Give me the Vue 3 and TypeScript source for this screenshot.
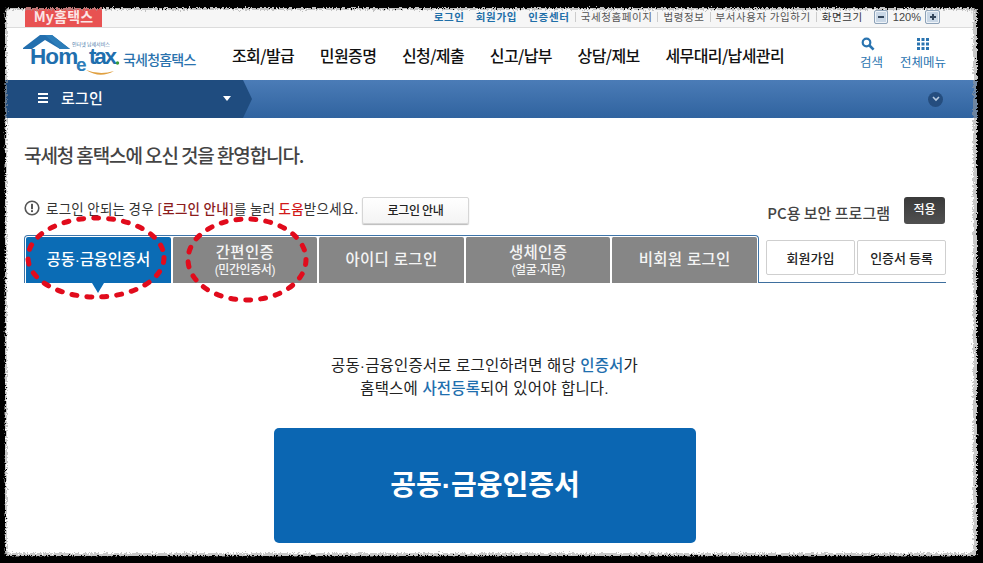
<script setup lang="ts">
const navItems: string[] = ['조회/발급', '민원증명', '신청/제출', '신고/납부', '상담/제보', '세무대리/납세관리']
interface Tab { title: string; sub?: string; active?: boolean }
const tabs: Tab[] = [
  { title: '공동·금융인증서', active: true },
  { title: '간편인증', sub: '(민간인증서)' },
  { title: '아이디 로그인' },
  { title: '생체인증', sub: '(얼굴·지문)' },
  { title: '비회원 로그인' }
]
const utilLinks: string[] = ['국세청홈페이지', '법령정보', '부서사용자 가입하기']
</script>

<template>
  <div class="page">
    <div class="frame">
      <div class="topbar">
        <a class="my">My홈택스</a>
        <div class="util">
          <a class="strong">로그인</a>
          <a class="strong">회원가입</a>
          <a class="strong">인증센터</a>
          <a v-for="l in utilLinks" :key="l" class="plain">{{ l }}</a>
          <span class="plain dark">화면크기</span>
          <span class="zoombtn minus"><i></i></span>
          <span class="pct">120%</span>
          <span class="zoombtn plus"><i></i><i></i></span>
        </div>
      </div>

      <header class="header">
        <div class="logo">
          <svg class="logo-mark" width="99" height="44" viewBox="0 0 99 44">
            <path d="M-1 16 L16 3 L28 3 L46 17 L36 17 L21 8 L8 17 L-1 17 Z" fill="#236fae" />
            <path d="M21 3 L28 3 L46 17 L36 17 Z" fill="#2c7db9" />
            <text x="48" y="14" class="tiny">인터넷 납세서비스</text>
            <text x="6" y="32" class="logo-t">Hom</text>
            <text x="52" y="39" class="logo-e">e</text>
            <text x="65" y="32" class="logo-t narrow">tax</text>
            <circle cx="93.5" cy="31" r="1.7" fill="#3a9a3a" />
            <path d="M62 38 Q76 47 90 39 Q76 43.5 62 38 Z" fill="#e0a040" />
          </svg>
          <span class="logo-name">국세청홈택스</span>
        </div>
        <nav class="gnb">
          <a v-for="n in navItems" :key="n">{{ n }}</a>
        </nav>
        <div class="tools">
          <a class="tool search">
            <svg width="14" height="14" viewBox="0 0 14 14">
              <circle cx="5.5" cy="5.5" r="3.8" fill="none" stroke="#2a74b0" stroke-width="2.2" />
              <path d="M8.5 8.5 L12.6 12.6" stroke="#2a74b0" stroke-width="2.6" />
            </svg>
            <span>검색</span>
          </a>
          <a class="tool">
            <svg width="14" height="14" viewBox="0 0 14 14" fill="#2a74b0">
              <rect x="1" y="1" width="3" height="3" /><rect x="5.5" y="1" width="3" height="3" /><rect x="10" y="1" width="3" height="3" />
              <rect x="1" y="5.5" width="3" height="3" /><rect x="5.5" y="5.5" width="3" height="3" /><rect x="10" y="5.5" width="3" height="3" />
              <rect x="1" y="10" width="3" height="3" /><rect x="5.5" y="10" width="3" height="3" /><rect x="10" y="10" width="3" height="3" />
            </svg>
            <span>전체메뉴</span>
          </a>
        </div>
      </header>

      <div class="crumb">
        <div class="crumb-left">
          <span class="burger"><i></i><i></i><i></i></span>
          <span class="crumb-title">로그인</span>
          <span class="caret"></span>
        </div>
        <span class="circle-down">
          <svg width="8" height="6" viewBox="0 0 8 6"><path d="M1 1 L4 4 L7 1" fill="none" stroke="#b9cbe0" stroke-width="1.6" /></svg>
        </span>
      </div>

      <main class="main">
        <h1 class="welcome">국세청 홈택스에 오신 것을 환영합니다.</h1>

        <div class="notice-row">
          <svg class="info" width="16" height="16" viewBox="0 0 16 16">
            <circle cx="8" cy="8" r="6.8" fill="none" stroke="#555" stroke-width="1.6" />
            <rect x="7.1" y="3.8" width="1.8" height="5.4" fill="#444" />
            <rect x="7.1" y="10.2" width="1.8" height="1.9" fill="#444" />
          </svg>
          <p class="notice">로그인 안되는 경우 <b class="dark-red">[로그인 안내]</b>를 눌러 <b class="red">도움</b>받으세요.</p>
          <button class="guide">로그인 안내</button>
          <span class="pc">PC용 보안 프로그램</span>
          <button class="apply">적용</button>
        </div>

        <div class="tab-row">
          <div class="tabs">
            <div v-for="t in tabs" :key="t.title" class="tab" :class="{ active: t.active }">
              <span class="tab-title">{{ t.title }}</span>
              <span v-if="t.sub" class="tab-sub">{{ t.sub }}</span>
            </div>
          </div>
          <div class="side">
            <button class="side-btn">회원가입</button>
            <button class="side-btn">인증서 등록</button>
          </div>
        </div>

        <div class="desc">
          <p>공동·금융인증서로 로그인하려면 해당 <em>인증서</em>가</p>
          <p>홈택스에 <em>사전등록</em>되어 있어야 합니다.</p>
        </div>

        <button class="big">공동·금융인증서</button>

        <svg class="marks" width="320" height="90" viewBox="0 0 320 90">
          <ellipse cx="72" cy="43.5" rx="68" ry="39.5" />
          <ellipse cx="223" cy="45.5" rx="59" ry="40.5" />
        </svg>
      </main>
    </div>

    <svg class="edge" width="983" height="563" viewBox="0 0 983 563">
      <defs>
        <filter id="torn" x="-5%" y="-5%" width="110%" height="110%">
          <feTurbulence type="fractalNoise" baseFrequency="0.55" numOctaves="2" seed="4" />
          <feDisplacementMap in="SourceGraphic" scale="6" xChannelSelector="R" yChannelSelector="G" />
          <feGaussianBlur stdDeviation="0.4" />
        </filter>
      </defs>
      <path filter="url(#torn)" fill="#9a9a9a" fill-opacity="0.55" fill-rule="evenodd"
        d="M-20 -20H1003V583H-20Z M10 10 H969 Q973 10 973 14 V549 Q973 553 969 553 H10 Q7 553 7 549 V14 Q7 10 10 10 Z" />
      <path filter="url(#torn)" fill="#000" fill-rule="evenodd"
        d="M-20 -20H1003V583H-20Z M9 8 H972 Q977 8 977 13 V552 Q977 556 972 556 H9 Q5 556 5 552 V13 Q5 8 9 8 Z" />
    </svg>
  </div>
</template>

<style>
html, body { margin: 0; background: #000; }
</style>

<style scoped>
* { box-sizing: border-box; }
.page {
  position: relative;
  width: 983px;
  height: 563px;
  overflow: hidden;
  background: #000;
  padding: 5px 5px 7px 5px;
  font-family: "Noto Sans CJK KR", "Noto Sans", sans-serif;
  color: #222;
}
.frame {
  height: 551px;
  background: #fff;
  display: flex;
  flex-direction: column;
  overflow: hidden;
}
.edge { position: absolute; left: 0; top: 0; pointer-events: none; }

.topbar {
  height: 23px;
  flex: none;
  background: #f6f6f6;
  border-bottom: 1px solid #dcdcdc;
  display: flex;
  align-items: flex-end;
  justify-content: space-between;
  padding-left: 20px;
  padding-right: 38px;
}
.my {
  width: 77px;
  height: 20px;
  background: #e85252;
  color: #fbe5e5;
  font-size: 14px;
  font-weight: 700;
  line-height: 18px;
  text-align: center;
  letter-spacing: 0.2px;
}
.util {
  height: 22px;
  display: flex;
  align-items: center;
  font-size: 10.5px;
  white-space: nowrap;
  padding-top: 1px;
}
.util .strong { color: #1f6fa8; font-weight: 700; margin-right: 11px; letter-spacing: 0.7px; }
.util .strong:nth-child(3) { margin-right: 5px; }
.util .plain { color: #555; padding: 0 5px 0 5px; border-left: 1px solid #ccc; line-height: 10px; letter-spacing: 0.6px; }
.util .dark { color: #333; padding-right: 4px; }
.zoombtn {
  position: relative;
  width: 14px;
  height: 14px;
  margin-left: 7px;
  border: 1px solid #8da2b8;
  background: #c9d7e6;
  border-radius: 2px;
  box-shadow: inset 0 0 0 1px #eef3f8;
  display: flex;
  align-items: center;
  justify-content: center;
}
.zoombtn i { display: block; width: 6px; height: 2px; background: #33465c; }
.plus { margin-left: 4px; width: 15px; }
.plus i + i { position: absolute; width: 2px; height: 6px; left: 5.5px; top: 3px; }
.pct { color: #444; font: 11px "Liberation Sans", sans-serif; margin-left: 5px; }

.header {
  height: 52px;
  flex: none;
  display: flex;
  align-items: center;
  padding-left: 19px;
}
.logo { width: 208px; flex: none; display: flex; align-items: center; height: 52px; }
.logo-mark { flex: none; overflow: visible; }
.tiny { font-size: 5px; fill: #4a7aa8; }
.logo-t { font: 700 22.5px "Liberation Sans", sans-serif; fill: #1f6fae; letter-spacing: -0.9px; }
.narrow { letter-spacing: -2.2px; }
.logo-e { font: 700 19px "Liberation Sans", sans-serif; fill: #2c7db9; }
.logo-name { color: #2a72ad; font-size: 14px; font-weight: 500; letter-spacing: -0.8px; margin-top: 9px; white-space: nowrap; }
.gnb {
  display: flex;
  font-size: 16px;
  font-weight: 500;
  color: #111;
  letter-spacing: -0.6px;
  white-space: nowrap;
  width: 553px;
  flex: none;
  padding-top: 2px;
  gap: 25.7px;
}
.tools {
  margin-left: 75px;
  display: flex;
  gap: 17px;
  color: #2a74b0;
  font-size: 12.5px;
  white-space: nowrap;
}
.tool { display: flex; flex-direction: column; align-items: center; gap: 1px; }
.search svg { margin-right: 8px; }

.crumb {
  height: 38px;
  flex: none;
  display: flex;
  justify-content: space-between;
  align-items: center;
  background: linear-gradient(#4b7cb7, #30639f);
  padding-right: 35px;
}
.crumb-left {
  width: 247px;
  height: 38px;
  display: flex;
  align-items: center;
  padding: 0 0 3px 33px;
  background: #1f4c7f;
  color: #fff;
  clip-path: polygon(0 0, 238px 0, 247px 19px, 238px 38px, 0 38px);
}
.burger { width: 10px; display: flex; flex-direction: column; gap: 2px; }
.burger i { display: block; height: 2px; background: #fff; }
.crumb-title { margin-left: 13px; font-size: 15px; font-weight: 500; letter-spacing: 0.2px; }
.caret {
  margin-left: 120px;
  margin-top: 2px;
  border: 4px solid transparent;
  border-top: 5px solid #fff;
  border-bottom: 0;
}
.circle-down {
  width: 15px;
  height: 15px;
  border-radius: 50%;
  background: #254d7e;
  display: flex;
  align-items: center;
  justify-content: center;
}

.main { position: relative; flex: 1; padding: 0 33px 0 19px; min-height: 0; }
.welcome {
  margin: 23px 0 0;
  font-size: 19px;
  line-height: 27px;
  font-weight: 500;
  letter-spacing: -1.1px;
  color: #444;
}
.notice-row {
  margin-top: 29px;
  display: flex;
  align-items: center;
  height: 27px;
}
.info { flex: none; margin-bottom: 6px; }
.notice {
  margin: 0 0 6px 6px;
  font-size: 13.5px;
  color: #333;
  white-space: nowrap;
  letter-spacing: 0.25px;
  width: 316px;
}
.notice b { font-weight: 500; }
.dark-red { color: #8c1c1c; }
.red { color: #d21a1a; }
.guide {
  width: 107px;
  height: 27px;
  flex: none;
  border: 1px solid #d6d6d6;
  border-radius: 2px;
  background: linear-gradient(#fff, #f4f4f4);
  box-shadow: 0 1px 1px #bbb;
  font: 500 12px "Noto Sans CJK KR", sans-serif;
  color: #222;
  letter-spacing: -0.3px;
  padding: 0 0 3px;
}
.pc { margin-left: auto; margin-top: 3px; font-size: 15px; font-weight: 500; color: #444; white-space: nowrap; }
.apply {
  width: 41px;
  height: 27px;
  margin-left: 14px;
  flex: none;
  border: 0;
  border-radius: 3px;
  background: linear-gradient(#3a3a3a, #505050);
  color: #fff;
  font: 500 12px "Noto Sans CJK KR", sans-serif;
  padding: 0 0 4px;
}

.tab-row { margin-top: 11px; margin-right: -1px; display: flex; height: 48px; }
.tabs {
  width: 735px;
  flex: none;
  display: flex;
  gap: 1px;
  padding: 1px 1px 0;
  border: 1px solid #3e74a8;
  border-bottom: 0;
  border-radius: 4px 4px 0 0;
}
.tab {
  flex: 1;
  position: relative;
  background: #868686;
  color: #f4f4f4;
  border-radius: 2px 2px 0 0;
  border-left: 1px solid #fff;
  display: flex;
  flex-direction: column;
  align-items: center;
  justify-content: center;
  font-family: "Liberation Sans", "Noto Sans CJK KR", sans-serif;
  font-size: 15.5px;
  font-weight: 500;
  letter-spacing: 0.3px;
  line-height: 20px;
  white-space: nowrap;
}
.tab:first-child { border-left: 0; }
.tab.active { background: #0b6cb5; color: #fff; letter-spacing: -0.2px; }
.tab.active::after {
  content: "";
  position: absolute;
  left: 66px;
  bottom: -10px;
  border: 6px solid transparent;
  border-top: 10px solid #0b6cb5;
  border-bottom: 0;
}
.tab-sub { font-size: 12px; line-height: 14px; letter-spacing: -0.4px; font-weight: 500; }
.side {
  flex: 1;
  padding: 5px 0 0 7px;
  display: flex;
  gap: 2px;
  align-items: flex-start;
  border-bottom: 1px solid #3e6f9e;
}
.side-btn {
  width: 89px;
  height: 35px;
  border: 1px solid #cfcfcf;
  border-radius: 2px;
  background: #fff;
  font: 500 13px "Noto Sans CJK KR", sans-serif;
  color: #222;
  padding: 0;
}

.desc {
  margin-top: 71px;
  text-align: center;
  font-family: "Liberation Sans", "Noto Sans CJK KR", sans-serif;
  font-size: 15.5px;
  line-height: 23px;
  letter-spacing: 0.15px;
  color: #222;
}
.desc p { margin: 0; }
.desc em { font-style: normal; color: #1f6fae; font-weight: 500; }

.big {
  display: block;
  width: 422px;
  height: 115px;
  margin: 28px 0 0 250px;
  border: 0;
  border-radius: 5px;
  background: #0b66b2;
  color: #fff;
  font: 700 28px "Liberation Sans", "Noto Sans CJK KR", sans-serif;
  padding: 0 0 5px;
}

.marks { position: absolute; left: 19px; top: 96px; pointer-events: none; }
.marks ellipse {
  fill: none;
  stroke: #e10b1c;
  stroke-width: 5;
  stroke-linecap: round;
  stroke-dasharray: 5 10;
}
</style>
